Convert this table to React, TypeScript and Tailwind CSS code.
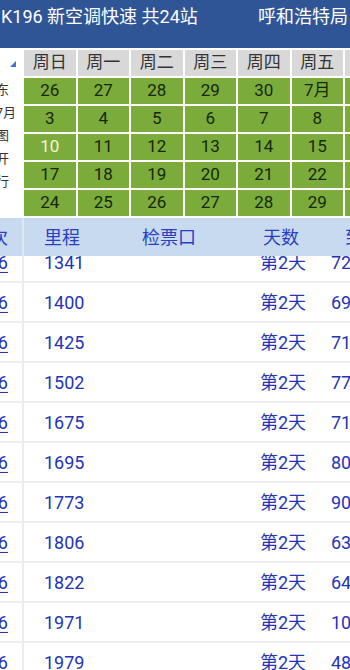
import React from "react";

const weekdays = ["周日", "周一", "周二", "周三", "周四", "周五", "周六"];

const calendar: string[][] = [
  ["26", "27", "28", "29", "30", "7月", "2"],
  ["3", "4", "5", "6", "7", "8", "9"],
  ["10", "11", "12", "13", "14", "15", "16"],
  ["17", "18", "19", "20", "21", "22", "23"],
  ["24", "25", "26", "27", "28", "29", "30"],
];

const sideChars = [
  { ch: "东", pad: "pr-[15px]" },
  { ch: "7月", pad: "pr-[8px]" },
  { ch: "图", pad: "pr-[15px]" },
  { ch: "开", pad: "pr-[15px]" },
  { ch: "行", pad: "pr-[15px]" },
];

const stops = [
  { km: "1341", day: "第2天", stay: "72" },
  { km: "1400", day: "第2天", stay: "69" },
  { km: "1425", day: "第2天", stay: "71" },
  { km: "1502", day: "第2天", stay: "77" },
  { km: "1675", day: "第2天", stay: "71" },
  { km: "1695", day: "第2天", stay: "80" },
  { km: "1773", day: "第2天", stay: "90" },
  { km: "1806", day: "第2天", stay: "63" },
  { km: "1822", day: "第2天", stay: "64" },
  { km: "1971", day: "第2天", stay: "100" },
  { km: "1979", day: "第2天", stay: "48" },
];

export default function App() {
  return (
    <div
      className="w-[350px] h-[670px] overflow-hidden bg-white"
      style={{ fontFamily: "Roboto, 'Noto Sans CJK SC', sans-serif" }}
    >
      {/* HEADER */}
      <div className="h-[48px] bg-[#2f5597] text-white text-[18px] leading-none flex justify-between pt-[8px] whitespace-nowrap">
        <span className="pl-[1px]">K196 新空调快速 共24站</span>
        <span className="pr-[2px]">呼和浩特局</span>
      </div>

      {/* CALENDAR */}
      <div className="flex pt-[2px] h-[170px]">
        <div className="w-[24px] shrink-0 flex flex-col items-end overflow-hidden text-[13px] text-[#333] leading-none">
          <div className="h-[28px] w-full flex items-center justify-end pr-[8px]">
            <svg width="6" height="6" viewBox="0 0 6 6">
              <path d="M6 0 L6 6 L0 6 Z" fill="#3d78d0" />
            </svg>
          </div>
          {sideChars.map((s, i) => (
            <div key={i} className={`h-[23px] flex items-center justify-end whitespace-nowrap ${s.pad}`}>
              {s.ch}
            </div>
          ))}
        </div>
        <div className="grid grid-cols-[repeat(7,51.5px)] auto-rows-[26px] gap-[2px] shrink-0">
          {weekdays.map((w) => (
            <div key={w} className="bg-[#d8d8d8] flex items-center justify-center text-[17px] text-[#333]">
              {w}
            </div>
          ))}
          {calendar.flat().map((d, i) => (
            <div
              key={i}
              className={`bg-[#7bab3b] flex items-center justify-center text-[17px] ${
                i === 14 ? "text-[#f4f6d8]" : "text-[#15280a]"
              }`}
            >
              {d}
            </div>
          ))}
        </div>
      </div>

      {/* TABLE HEADER */}
      <div className="relative z-10 flex h-[38px] bg-[#c7daf0] text-[18px] text-[#2a3ec4] whitespace-nowrap">
        <div className="w-[22px] shrink-0 overflow-hidden flex items-center justify-end pr-[14px]">
          车次
        </div>
        <div className="w-[2px] shrink-0 bg-[#dde8f5]" />
        <div className="w-[98px] shrink-0 flex items-center pl-[20px]">里程</div>
        <div className="w-[118px] shrink-0 flex items-center pl-[20px]">检票口</div>
        <div className="w-[105px] shrink-0 flex items-center pl-[23px]">天数</div>
        <div className="flex items-center">到站</div>
      </div>

      {/* TABLE BODY */}
      <div className="mt-[-13px]">
        {stops.map((s) => (
          <div key={s.km} className="flex h-[40px] border-b-2 border-[#ededed] text-[18px] text-[#2433b8] whitespace-nowrap">
            <div className="w-[22px] shrink-0 overflow-hidden flex items-center justify-end pr-[14px]">
              <span className="underline underline-offset-[3px]">K196</span>
            </div>
            <div className="w-[2px] shrink-0 bg-[#ececec]" />
            <div className="w-[98px] shrink-0 flex items-center pl-[20px]">{s.km}</div>
            <div className="w-[118px] shrink-0" />
            <div className="w-[87px] shrink-0 flex items-center pl-[20px]">{s.day}</div>
            <div className="flex items-center pl-[4px]">{s.stay}</div>
          </div>
        ))}
      </div>
    </div>
  );
}
